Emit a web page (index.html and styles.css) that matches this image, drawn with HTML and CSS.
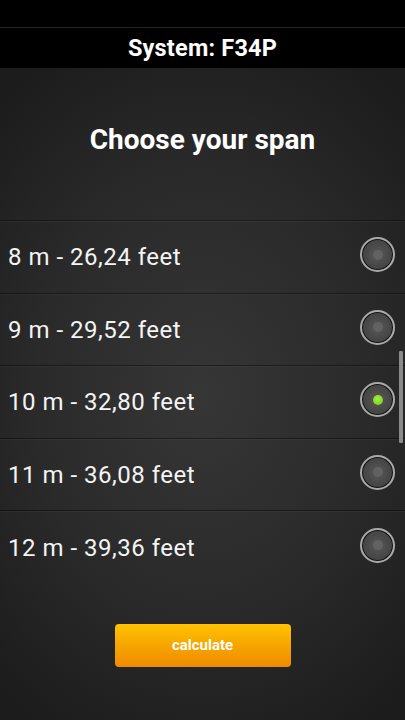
FILE: index.html
```html
<!DOCTYPE html>
<html lang="en">
<head>
    <meta charset="UTF-8">
    <meta name="viewport" content="width=device-width, initial-scale=1.0">
    <title>Choose your span</title>
    <link rel="stylesheet" href="styles.css">
</head>
<body>
    <div class="statusbar"></div>
    <div class="titlebar">System: F34P</div>
    <div class="content">
        <h1 class="heading">Choose your span</h1>
        <div class="list">
            <label class="row">
                <span class="label">8 m - 26,24 feet</span>
                <span class="radio"><span class="dot"></span></span>
            </label>
            <label class="row">
                <span class="label">9 m - 29,52 feet</span>
                <span class="radio"><span class="dot"></span></span>
            </label>
            <label class="row">
                <span class="label">10 m - 32,80 feet</span>
                <span class="radio checked"><span class="dot"></span></span>
            </label>
            <label class="row">
                <span class="label">11 m - 36,08 feet</span>
                <span class="radio"><span class="dot"></span></span>
            </label>
            <label class="row">
                <span class="label">12 m - 39,36 feet</span>
                <span class="radio"><span class="dot"></span></span>
            </label>
            <div class="scrollbar"></div>
        </div>
        <div class="actions">
            <button class="calc">calculate</button>
        </div>
    </div>
</body>
</html>
```

FILE: styles.css
```css
body{
    margin: 0;
    padding: 0;
    width: 405px;
    height: 720px;
    overflow: hidden;
    background-color: #000;
    color: white;
    font-family: Roboto, "Liberation Sans", Arial, sans-serif;
}

.statusbar{
    height: 27px;
    background-color: #000;
    border-bottom: 1px solid #262626;
}

.titlebar{
    height: 40px;
    line-height: 40px;
    background-color: #000;
    text-align: center;
    font-weight: bold;
    font-size: 23.5px;
    letter-spacing: 0.2px;
}

.content{
    height: 652px;
    background: radial-gradient(ellipse 75% 60% at 50% 50%, #363636 0%, #2a2a2a 55%, #1c1c1c 100%);
    display: flex;
    flex-direction: column;
}

.heading{
    margin: 0;
    padding-top: 54px;
    height: 98px;
    box-sizing: border-box;
    text-align: center;
    font-size: 28px;
    font-weight: bold;
    line-height: 36px;
}

.list{
    position: relative;
    margin-top: 54px;
    border-top: 1px solid rgba(0,0,0,0.35);
}

.row{
    display: flex;
    align-items: center;
    justify-content: space-between;
    height: 72.5px;
    box-sizing: border-box;
    padding: 0 10px 0 8px;
    border-bottom: 1px solid rgba(0,0,0,0.45);
    box-shadow: inset 0 1px 0 rgba(255,255,255,0.04);
}

.row:last-of-type{
    border-bottom: none;
}

.label{
    font-size: 24px;
    letter-spacing: 0.5px;
    color: #f4f4f4;
    padding-top: 1px;
}

.radio{
    width: 35px;
    height: 35px;
    box-sizing: border-box;
    border-radius: 50%;
    border: 2px solid #a9a9a9;
    background: radial-gradient(circle, #5a5a5a 0%, #4a4a4a 45%, #3c3c3c 100%);
    box-shadow: inset 0 0 0 1px #111;
    display: flex;
    align-items: center;
    justify-content: center;
    margin-top: -4px;
}

.dot{
    width: 10px;
    height: 10px;
    border-radius: 50%;
    background-color: #626262;
}

.radio.checked .dot{
    background: radial-gradient(circle at 45% 40%, #a6f040 0%, #7fd51a 70%, #6cbd12 100%);
}

.scrollbar{
    position: absolute;
    right: 2px;
    top: 130px;
    width: 4px;
    height: 92px;
    background-color: #8a8a8a;
    border-radius: 1px;
}

.actions{
    display: flex;
    justify-content: center;
    margin-top: 40px;
}

.calc{
    width: 176px;
    height: 43px;
    border: none;
    border-radius: 4px;
    background: linear-gradient(#ffc300, #f7a800 45%, #ef8a00);
    color: white;
    font-family: Roboto, "Liberation Sans", Arial, sans-serif;
    font-weight: bold;
    font-size: 15px;
    padding: 0;
}
```
